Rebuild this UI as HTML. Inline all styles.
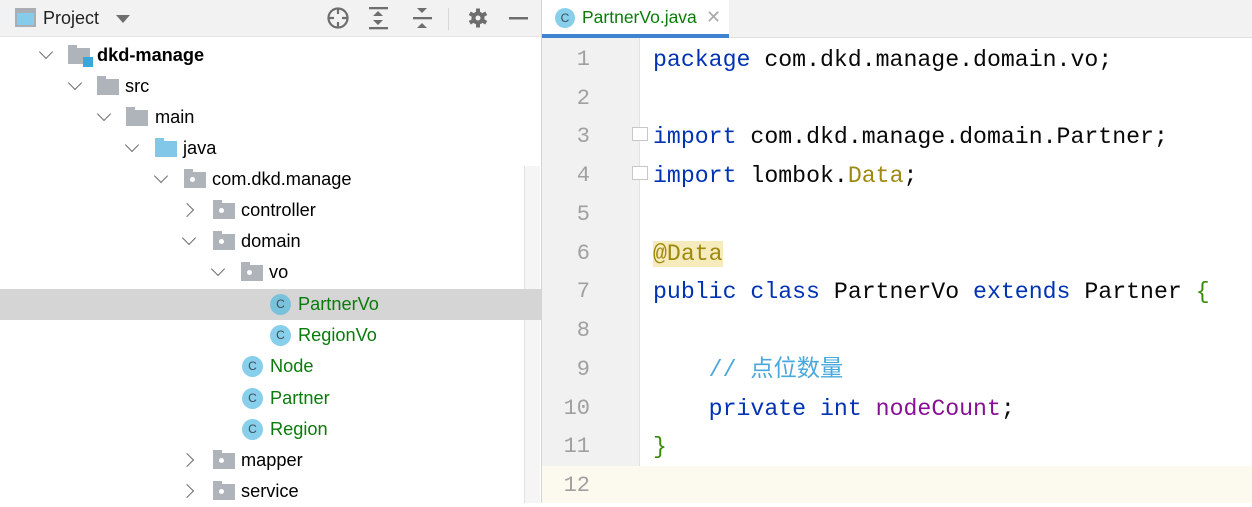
<!DOCTYPE html>
<html><head><meta charset="utf-8"><style>
*{margin:0;padding:0;box-sizing:border-box}
body{width:1252px;height:503px;overflow:hidden;background:#fff;position:relative;font-family:"Liberation Sans","Noto Sans CJK SC",sans-serif}
.abs{position:absolute}
#hdr{left:0;top:0;width:541px;height:37px;background:#f2f2f2;border-bottom:1px solid #e6e6e6}
#tabs{left:542px;top:0;width:710px;height:38px;background:#f2f2f2;border-bottom:1px solid #e0e0e0}
.row{position:absolute;left:0;width:541px;height:31px}
.t{position:absolute;font-size:18.2px;line-height:31px;top:0;color:#000;white-space:nowrap}
.g{color:#0a7b0a}
.chev{position:absolute;top:10px;width:10px;height:10px;border-right:1.4px solid #6e6e6e;border-bottom:1.4px solid #6e6e6e}
.dn{transform:rotate(45deg);top:7px}
.rt{transform:rotate(-45deg);top:10px}
.fold{position:absolute;top:8px;width:22px;height:16px;background:#aeb4ba}
.fold:before{content:"";position:absolute;left:0;top:-3px;width:9px;height:4px;background:#aeb4ba}
.pkg:after{content:"";position:absolute;left:6px;top:5px;width:5px;height:5px;border-radius:50%;background:#fff}
.blue,.blue:before{background:#82c7e8}
.cls{position:absolute;top:5px;width:21px;height:21px;border-radius:50%;background:#87cfea;color:#3c4d5c;font-size:12px;line-height:21px;text-align:center;font-family:"Liberation Sans",sans-serif}
#gut{left:542px;top:38px;width:98px;height:465px;background:#f1f1f1;border-right:1px solid #e3e3e3}
.ln{position:absolute;left:542px;width:48px;text-align:right;font-family:"Liberation Mono",monospace;font-size:22px;color:#a0a0a0;line-height:38px}
.cl{position:absolute;left:653px;font-family:"Liberation Mono","Noto Sans CJK SC",monospace;font-size:23.2px;line-height:38px;color:#080808;white-space:pre}
.k{color:#0033b3}.a{color:#9e880d;background:#f6ebbc}.f{color:#871094}.c{color:#4aa8dc}.b{color:#3b8c0b}
</style></head><body>
<div id="hdr" class="abs"></div>
<div class="abs" style="left:15px;top:8px;width:21px;height:19px;border:2px solid #a8aeb4;background:#86cbea"></div>
<div class="abs" style="left:15px;top:8px;width:21px;height:5px;background:#a8aeb4"></div>
<div class="abs" style="left:43px;top:0;font-size:18px;line-height:36px;color:#222">Project</div>
<div class="abs" style="left:116px;top:15px;width:0;height:0;border-left:7px solid transparent;border-right:7px solid transparent;border-top:8px solid #6e6e6e"></div>
<svg class="abs" style="left:320px;top:0" width="220" height="37" viewBox="0 0 220 37">
<g stroke="#6e6e6e" stroke-width="2.2" fill="none"><circle cx="18" cy="18" r="9.5"/><path d="M18 8v6M18 22v6M8 18h6M22 18h6"/></g>
<g fill="#6e6e6e"><rect x="49" y="7" width="19" height="2.3"/><rect x="49" y="27" width="19" height="2.3"/><path d="M53 16l5-5 5 5zM53 20l5 5 5-5z"/>
<rect x="93" y="17" width="19" height="2.3"/><path d="M97 8l5 5 5-5zM97 28l5-5 5 5z"/></g>
<rect x="128" y="8" width="1" height="22" fill="#d6d6d6"/>
<g fill="#6e6e6e" transform="translate(158 18)"><circle r="6.5"/><rect x="-2" y="-9.5" width="4" height="19"/><rect x="-2" y="-9.5" width="4" height="19" transform="rotate(60)"/><rect x="-2" y="-9.5" width="4" height="19" transform="rotate(120)"/></g><circle cx="158" cy="18" r="2.5" fill="#f2f2f2"/>
<rect x="189" y="17" width="19" height="2.5" fill="#6e6e6e"/></svg>
<div class="abs" style="left:541px;top:0;width:1px;height:503px;background:#d4d4d4"></div>
<div class="abs" style="left:524px;top:166px;width:16px;height:337px;background:#f5f5f5;border-left:1px solid #e2e2e2"></div>

<div class="row" style="top:289px;background:#d5d5d5"></div>

<div class="row" style="top:40px"><div class="chev dn" style="left:41px"></div><div class="fold" style="left:68px"></div><div class="abs" style="left:83px;top:17px;width:10px;height:10px;background:#3aa7dc"></div><div class="t" style="left:97px;font-weight:bold">dkd-manage</div></div>
<div class="row" style="top:71px"><div class="chev dn" style="left:70px"></div><div class="fold" style="left:97px"></div><div class="t" style="left:125px">src</div></div>
<div class="row" style="top:102px"><div class="chev dn" style="left:99px"></div><div class="fold" style="left:126px"></div><div class="t" style="left:155px">main</div></div>
<div class="row" style="top:133px"><div class="chev dn" style="left:127px"></div><div class="fold blue" style="left:155px"></div><div class="t" style="left:183px">java</div></div>
<div class="row" style="top:164px"><div class="chev dn" style="left:156px"></div><div class="fold pkg" style="left:184px"></div><div class="t" style="left:212px">com.dkd.manage</div></div>
<div class="row" style="top:195px"><div class="chev rt" style="left:182px"></div><div class="fold pkg" style="left:213px"></div><div class="t" style="left:241px">controller</div></div>
<div class="row" style="top:226px"><div class="chev dn" style="left:184px"></div><div class="fold pkg" style="left:213px"></div><div class="t" style="left:241px">domain</div></div>
<div class="row" style="top:257px"><div class="chev dn" style="left:213px"></div><div class="fold pkg" style="left:241px"></div><div class="t" style="left:269px">vo</div></div>
<div class="row" style="top:289px"><div class="cls" style="left:270px;background:#79c2dc">C</div><div class="t g" style="left:298px">PartnerVo</div></div>
<div class="row" style="top:320px"><div class="cls" style="left:270px">C</div><div class="t g" style="left:298px">RegionVo</div></div>
<div class="row" style="top:351px"><div class="cls" style="left:242px">C</div><div class="t g" style="left:270px">Node</div></div>
<div class="row" style="top:383px"><div class="cls" style="left:242px">C</div><div class="t g" style="left:270px">Partner</div></div>
<div class="row" style="top:414px"><div class="cls" style="left:242px">C</div><div class="t g" style="left:270px">Region</div></div>
<div class="row" style="top:445px"><div class="chev rt" style="left:182px"></div><div class="fold pkg" style="left:213px"></div><div class="t" style="left:241px">mapper</div></div>
<div class="row" style="top:476px"><div class="chev rt" style="left:182px"></div><div class="fold pkg" style="left:213px"></div><div class="t" style="left:241px">service</div></div>

<div id="tabs" class="abs"></div>
<div class="abs" style="left:542px;top:0;width:187px;height:38px;background:#fff;border-bottom:4px solid #3f82d0"></div>
<div class="cls" style="left:555px;top:8px;width:20px;height:20px;line-height:20px">C</div>
<div class="abs g" style="left:582px;top:0;font-size:17.5px;line-height:35px">PartnerVo.java</div>
<div class="abs" style="left:706px;top:0;font-size:18px;line-height:35px;color:#aaa">✕</div>

<div id="gut" class="abs"></div>
<div class="abs" style="left:542px;top:466px;width:710px;height:37px;background:#fcfaee"></div>
<div class="abs" style="left:632px;top:127px;width:16px;height:14px;border:1px solid #c8c8c8;background:#fff"></div>
<div class="abs" style="left:632px;top:166px;width:16px;height:14px;border:1px solid #c8c8c8;background:#fff"></div>

<div class="ln" style="top:41px">1</div>
<div class="ln" style="top:80px">2</div>
<div class="ln" style="top:118px">3</div>
<div class="ln" style="top:157px">4</div>
<div class="ln" style="top:196px">5</div>
<div class="ln" style="top:235px">6</div>
<div class="ln" style="top:273px">7</div>
<div class="ln" style="top:312px">8</div>
<div class="ln" style="top:351px">9</div>
<div class="ln" style="top:390px">10</div>
<div class="ln" style="top:428px">11</div>
<div class="ln" style="top:467px">12</div>

<div class="cl" style="top:41px"><span class="k">package</span> com.dkd.manage.domain.vo;</div>
<div class="cl" style="top:118px"><span class="k">import</span> com.dkd.manage.domain.Partner;</div>
<div class="cl" style="top:157px"><span class="k">import</span> lombok.<span class="a" style="background:none">Data</span>;</div>
<div class="cl" style="top:235px"><span class="a">@Data</span></div>
<div class="cl" style="top:273px"><span class="k">public class</span> PartnerVo <span class="k">extends</span> Partner <span class="b">{</span></div>
<div class="cl" style="top:351px">    <span class="c">// 点位数量</span></div>
<div class="cl" style="top:390px">    <span class="k">private int</span> <span class="f">nodeCount</span>;</div>
<div class="cl" style="top:428px"><span class="b">}</span></div>
</body></html>
